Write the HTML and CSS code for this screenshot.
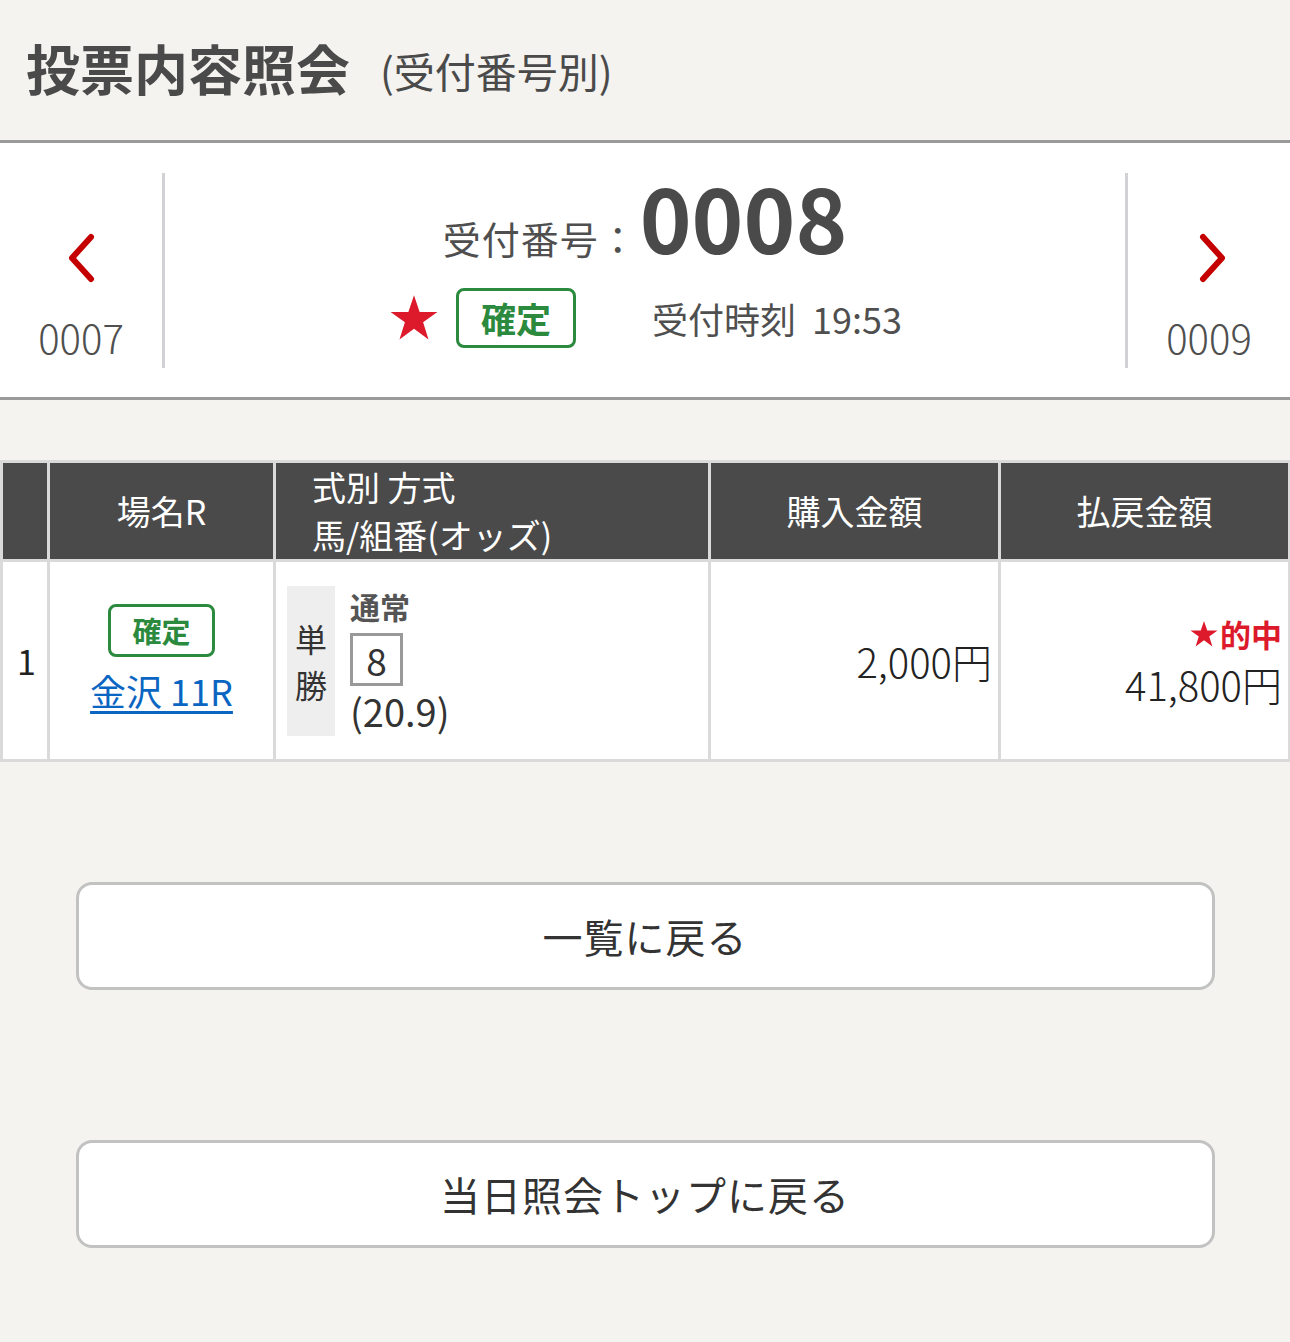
FILE: index.html
```html
<!DOCTYPE html>
<html lang="ja">
<head>
<meta charset="utf-8">
<title>投票内容照会</title>
<link rel="stylesheet" href="styles.css">
</head>
<body>
<header class="page-head">
  <h1 class="title">投票内容照会</h1>
  <span class="subtitle">(受付番号別)</span>
</header>

<section class="ticket-nav">
  <a class="nav prev" href="#">
    <svg class="chev" viewBox="0 0 30 50" width="30" height="50"><path d="M25 4 L6 25 L25 46" fill="none" stroke="#c40000" stroke-width="6" stroke-linecap="round" stroke-linejoin="round"/></svg>
    <span class="nav-num">0007</span>
  </a>
  <div class="ticket-main">
    <div class="ticket-no"><span class="label">受付番号：</span><span class="num">0008</span></div>
    <div class="ticket-meta">
      <svg class="star" viewBox="0 0 24 24" width="52" height="52"><path d="M12 1.5 L14.6 9.2 L22.8 9.2 L16.2 14 L18.7 21.9 L12 17 L5.3 21.9 L7.8 14 L1.2 9.2 L9.4 9.2 Z" fill="#dc1a2b"/></svg>
      <span class="badge">確定</span>
      <span class="time">受付時刻&nbsp;&nbsp;19:53</span>
    </div>
  </div>
  <a class="nav next" href="#">
    <svg class="chev" viewBox="0 0 30 50" width="30" height="50"><path d="M5 4 L24 25 L5 46" fill="none" stroke="#c40000" stroke-width="6" stroke-linecap="round" stroke-linejoin="round"/></svg>
    <span class="nav-num">0009</span>
  </a>
</section>

<table class="bets">
  <colgroup>
    <col class="c-no"><col class="c-race"><col class="c-type"><col class="c-buy"><col class="c-pay">
  </colgroup>
  <thead>
    <tr>
      <th></th>
      <th>場名R</th>
      <th class="th-left">式別 方式<br>馬/組番(オッズ)</th>
      <th>購入金額</th>
      <th>払戻金額</th>
    </tr>
  </thead>
  <tbody>
    <tr>
      <td class="no">1</td>
      <td class="race">
        <span class="badge small">確定</span><br>
        <a class="race-link" href="#">金沢 11R</a>
      </td>
      <td class="type">
        <div class="type-wrap">
          <div class="kind"><span>単</span><span>勝</span></div>
          <div class="detail">
            <div class="method">通常</div>
            <div class="horse">8</div>
            <div class="odds">(20.9)</div>
          </div>
        </div>
      </td>
      <td class="amount">2,000円</td>
      <td class="amount pay">
        <div class="hit"><svg viewBox="0 0 24 24" width="30" height="30"><path d="M12 1.5 L14.6 9.2 L22.8 9.2 L16.2 14 L18.7 21.9 L12 17 L5.3 21.9 L7.8 14 L1.2 9.2 L9.4 9.2 Z" fill="#dc1a2b"/></svg>的中</div>
        <div class="pay-val">41,800円</div>
      </td>
    </tr>
  </tbody>
</table>

<div class="actions">
  <a class="btn" href="#">一覧に戻る</a>
  <a class="btn" href="#">当日照会トップに戻る</a>
</div>
</body>
</html>
```

FILE: styles.css
```css
html, body {
  margin: 0;
  padding: 0;
  background: #f4f3f0;
}
body {
  font-family: "Noto Sans CJK JP", "Noto Sans", sans-serif;
  color: #4a4a4a;
  width: 1290px;
  height: 1342px;
  overflow: hidden;
}
a { text-decoration: none; color: inherit; }

.page-head {
  height: 143px;
  box-sizing: border-box;
  display: flex;
  align-items: center;
  padding: 0 0 6px 26px;
  border-bottom: 3px solid #9a9a9a;
}
.title {
  margin: 0;
  font-size: 54px;
  font-weight: 700;
  color: #4a4a4a;
}
.subtitle {
  font-size: 41px;
  margin-left: 30px;
  margin-top: 6px;
  color: #4a4a4a;
}

.ticket-nav {
  background: #fff;
  display: flex;
  height: 257px;
  border-bottom: 3px solid #9a9a9a;
  box-sizing: border-box;
  align-items: center;
}
.nav {
  width: 165px;
  height: 195px;
  display: flex;
  flex-direction: column;
  align-items: center;
  justify-content: flex-start;
  box-sizing: border-box;
}
.prev { border-right: 3px solid #d2d2d6; }
.next { border-left: 3px solid #d2d2d6; }
.chev { margin-top: 60px; }
.next .chev { margin-left: 8px; }
.nav-num {
  margin-top: 34px;
  font-size: 40px;
  line-height: 40px;
  color: #4f4f4f;
  font-weight: 300;
}
.ticket-main {
  flex: 1;
  display: flex;
  flex-direction: column;
  align-items: center;
  height: 195px;
}
.ticket-no {
  display: flex;
  align-items: baseline;
  margin-top: -5px;
}
.ticket-no .label {
  font-size: 38px;
  color: #4f4f4f;
  letter-spacing: 1px;
}
.ticket-no .num {
  font-size: 88px;
  font-weight: 700;
  line-height: 96px;
  color: #4a4a4a;
  margin-left: 2px;
}
.ticket-meta {
  display: flex;
  align-items: center;
  margin-top: 23px;
}
.star { margin-right: 16px; }
.badge {
  display: inline-block;
  border: 3px solid #2b8a3e;
  border-radius: 8px;
  color: #2b8a3e;
  font-weight: 700;
  font-size: 35px;
  line-height: 54px;
  padding: 0 22px;
}
.time {
  margin-left: 76px;
  font-size: 36px;
  color: #4f4f4f;
}

.bets {
  margin-top: 60px;
  width: 1290px;
  border-collapse: separate;
  border-spacing: 3px;
  background: #dadada;
  table-layout: fixed;
}
.c-no { width: 44px; }
.c-race { width: 223px; }
.c-type { width: 432px; }
.c-buy { width: 287px; }
.c-pay { width: 287px; }
.bets th {
  background: #4a4a4a;
  color: #fff;
  font-weight: 400;
  font-size: 34px;
  height: 94px;
  padding: 0;
  line-height: 48px;
}
.bets th.th-left {
  text-align: left;
  padding-left: 36px;
}
.bets td {
  background: #fff;
  height: 197px;
  padding: 0;
  vertical-align: middle;
  font-size: 34px;
  color: #222;
}
.no { padding-left: 14px !important; }
.race { text-align: center; }
.badge.small {
  font-size: 29px;
  line-height: 47px;
  padding: 0 21px;
  border-radius: 8px;
  margin-top: 6px;
}
.race-link {
  color: #0a66c2;
  text-decoration: underline;
  text-underline-offset: 5px;
  font-size: 36px;
  line-height: 66px;
}
.type-wrap {
  display: flex;
  align-items: center;
  padding-left: 11px;
}
.kind {
  width: 48px;
  height: 150px;
  background: #eeeeee;
  display: flex;
  flex-direction: column;
  align-items: center;
  justify-content: center;
  font-size: 32px;
  line-height: 46px;
  color: #333;
}
.detail {
  margin-left: 15px;
  display: flex;
  flex-direction: column;
  align-items: flex-start;
}
.method {
  font-size: 30px;
  font-weight: 700;
  color: #555;
  line-height: 42px;
}
.horse {
  border: 3px solid #999;
  width: 47px;
  height: 47px;
  display: flex;
  align-items: center;
  justify-content: center;
  font-size: 37px;
  color: #333;
  margin-top: 6px;
}
.odds {
  font-size: 38px;
  color: #333;
  line-height: 50px;
}
.amount {
  text-align: right;
  padding-right: 6px !important;
  font-size: 40px !important;
  font-weight: 300;
}
.hit {
  color: #dc1a2b;
  font-weight: 700;
  font-size: 31px;
  line-height: 40px;
  display: flex;
  justify-content: flex-end;
  align-items: center;
  margin-bottom: 6px;
}
.hit svg { margin-right: 1px; }
.pay-val { line-height: 48px; }

.actions {
  display: flex;
  flex-direction: column;
  align-items: center;
  gap: 150px;
  margin-top: 120px;
}
.btn {
  width: 1139px;
  height: 108px;
  box-sizing: border-box;
  background: #fff;
  border: 3px solid #c2c2c2;
  border-radius: 16px;
  display: flex;
  align-items: center;
  justify-content: center;
  font-size: 40px;
  color: #333;
  letter-spacing: 1px;
}
```
